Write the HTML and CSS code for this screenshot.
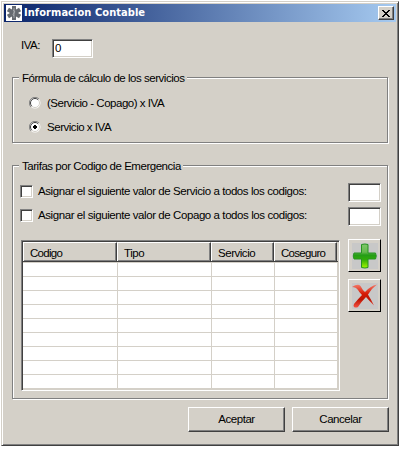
FILE: index.html
```
<!DOCTYPE html>
<html lang="es">
<head>
<meta charset="utf-8">
<title>Informacion Contable</title>
<link rel="stylesheet" href="styles.css">
</head>
<body>
<main class="window">
  <header class="titlebar">
    <svg class="app-icon" viewBox="0 0 16 16"><path fill="#fff" d="M0 0h16v16H0z"/><g fill="#656a70"><path d="M6 1h4v14H6z"/><path d="M6 1h4v14H6z" transform="rotate(60 8 8)"/><path d="M6 1h4v14H6z" transform="rotate(-60 8 8)"/></g><path d="M8 3v10M7 5q3 1 1 3t0 3" fill="none" stroke="#c4c7ca" stroke-width=".6"/></svg>
    <h1 class="title">Informacion Contable</h1>
    <button class="close" aria-label="Cerrar"><svg width="8" height="7" viewBox="0 0 8 7" shape-rendering="crispEdges"><path d="M0 0h2v1h1v1h2V1h1V0h2v1H7v1H6v1H5v1h1v1h1v1h1v1H6V6H5V5H3v1H2v1H0V6h1V5h1V4h1V3H2V2H1V1H0z"/></svg></button>
  </header>
  <section class="content">
    <label class="iva"><span class="iva-label">IVA:</span><input class="field iva-field" value="0"></label>
    <section class="group formula">
      <h2 class="legend legend-formula">Fórmula de cálculo de los servicios</h2>
      <label class="option"><svg class="radio" viewBox="0 0 12 12"><circle cx="6" cy="6" r="5.5" fill="#fff"/><path d="M2 10A5.500 5.500 0 0 1 10 2" fill="none" stroke="#808080"/><path d="M2.8 9.200A4.500 4.500 0 0 1 9.200 2.800" fill="none" stroke="#404040"/><path d="M2.800 9.200A4.500 4.500 0 0 0 9.200 2.800" fill="none" stroke="#d4d0c8"/></svg><span>(Servicio - Copago) x IVA</span></label>
      <label class="option"><svg class="radio" viewBox="0 0 12 12"><circle cx="6" cy="6" r="5.5" fill="#fff"/><path d="M2 10A5.500 5.500 0 0 1 10 2" fill="none" stroke="#808080"/><path d="M2.8 9.200A4.500 4.500 0 0 1 9.200 2.800" fill="none" stroke="#404040"/><path d="M2.800 9.200A4.500 4.500 0 0 0 9.200 2.800" fill="none" stroke="#d4d0c8"/><path d="M5 4h2v1h1v2H7v1H5V7H4V5h1z"/></svg><span>Servicio x IVA</span></label>
    </section>
    <section class="group rates">
      <h2 class="legend legend-rates">Tarifas por Codigo de Emergencia</h2>
      <div class="assign"><i class="check"></i><span class="assign-text">Asignar el siguiente valor de Servicio a todos los codigos:</span><input class="field small"></div>
      <div class="assign"><i class="check"></i><span class="assign-text">Asignar el siguiente valor de Copago a todos los codigos:</span><input class="field small"></div>
      <div class="list">
        <div class="table">
          <div class="row head"><span class="th th-tight">Codigo</span><span class="th">Tipo</span><span class="th">Servicio</span><span class="th th-tight">Coseguro</span></div>
          <div class="row"><i></i><i></i><i></i><i></i><i></i></div>
          <div class="row"><i></i><i></i><i></i><i></i><i></i></div>
          <div class="row"><i></i><i></i><i></i><i></i><i></i></div>
          <div class="row"><i></i><i></i><i></i><i></i><i></i></div>
          <div class="row"><i></i><i></i><i></i><i></i><i></i></div>
          <div class="row"><i></i><i></i><i></i><i></i><i></i></div>
          <div class="row"><i></i><i></i><i></i><i></i><i></i></div>
          <div class="row"><i></i><i></i><i></i><i></i><i></i></div>
          <div class="row"><i></i><i></i><i></i><i></i><i></i></div>
        </div>
        <div class="tools">
          <button class="tool" aria-label="Agregar"><svg width="26" height="26" viewBox="0 0 26 26"><defs><linearGradient id="green" x1="0" y1="0" x2="0" y2="1"><stop offset="0" stop-color="#80c86c"/><stop offset=".34" stop-color="#65b94d"/><stop offset=".46" stop-color="#249c17"/><stop offset=".65" stop-color="#31ac08"/><stop offset="1" stop-color="#a3f900"/></linearGradient></defs><path fill="#c8c8c8" d="M0 0h26v26H0z"/><path d="M9.500 1.500Q13 .5 16 1.500V10h7.500q1.500 3 0 6H16v8.500q-3 1-6.500 0V16H2q-1.500-3 0-6h7.500z" fill="url(#green)" stroke="#279222"/></svg></button>
          <button class="tool" aria-label="Eliminar"><svg width="26" height="26" viewBox="0 0 26 26"><defs><linearGradient id="red" x1="0" y1="0" x2="0" y2="1"><stop offset="0" stop-color="#f47b68"/><stop offset=".4" stop-color="#d61b06"/><stop offset=".65" stop-color="#bd1402"/><stop offset="1" stop-color="#f55242"/></linearGradient></defs><path fill="#c8c8c8" d="M0 0h26v26H0z"/><path fill="url(#red)" d="M0 4Q6 0 8.500 3q2 4 4.500 6 5-6 12-7.500Q20 5 16 11.500q3 5 6 11-5-5-8-8.500Q9 19 6 24q-2 1-4 0-1-1 0-3 4-5 8-9-3-3-4-5-2-3-6-3z"/></svg></button>
        </div>
      </div>
    </section>
    <footer class="actions"><button class="button">Aceptar</button><button class="button">Cancelar</button></footer>
  </section>
</main>
</body>
</html>
```
FILE: styles.css
```
* { box-sizing: border-box; }
body { margin: 0; background: #fff; color: #000; font: 11.5px/14px "Liberation Sans", Arial, sans-serif; letter-spacing: -.47px; white-space: nowrap; overflow: hidden; }
h1, h2 { margin: 0; font-size: inherit; font-weight: normal; }
button, input { font: inherit; color: inherit; letter-spacing: inherit; }
.window { width: 398px; height: 445px; margin: 1px; padding: 2px; background: #d4d0c8; border: 1px solid; border-color: #d4d0c8 #404040 #404040 #d4d0c8; box-shadow: inset 1px 1px #fff, inset -1px -1px #808080; }
.titlebar { height: 18px; display: flex; align-items: center; padding: 0 2px; background: linear-gradient(90deg, #0a246a, #a6caf0); }
.app-icon { width: 16px; height: 16px; }
.title { flex: 1; padding-left: 2px; color: #fff; font: bold 11px/16px "DejaVu Sans Condensed", "DejaVu Sans", sans-serif; letter-spacing: .06px; }
.close { width: 16px; height: 14px; padding: 0; display: flex; align-items: center; justify-content: center; background: #d4d0c8; border: 1px solid; border-color: #fff #404040 #404040 #fff; box-shadow: inset -1px -1px #808080; }
.content { padding: 17px 7px 0 8px; }
.iva { display: flex; height: 19px; padding-left: 9px; }
.iva-label { width: 31px; margin-top: -1px; }
.field { display: block; height: 19px; padding: 0 1px 1px 2px; border: 1px solid; border-color: #808080 #fff #fff #808080; border-radius: 0; background: #fff; box-shadow: inset 1px 1px #404040, inset -1px -1px #d4d0c8; outline: 0; }
.iva-field { width: 41px; }
.group { border: 1px solid #808080; box-shadow: 1px 1px #fff, inset 1px 1px #fff; width: 376px; }
.legend { height: 14px; margin: -7px 0 0 6px; padding-left: 3px; background: #d4d0c8; }
.legend-formula { width: 168px; }
.legend-rates { width: 164px; margin-bottom: 10px; }
.formula { height: 66px; margin-top: 19px; }
.option { display: flex; height: 24px; align-items: center; padding-left: 16px; }
.legend-formula + .option { margin-top: 6px; }
.radio { width: 12px; height: 12px; margin-right: 6px; }
.rates { height: 234px; margin-top: 22px; }
.assign { display: flex; height: 24px; padding-left: 7px; }
.check { width: 13px; height: 13px; margin: 2px 5px 0 0; background: #fff; border: 1px solid; border-color: #808080 #fff #fff #808080; box-shadow: inset 1px 1px #404040, inset -1px -1px #d4d0c8; }
.assign-text { width: 310px; padding-top: 1px; letter-spacing: -.42px; }
.small { width: 33px; }
.list { display: flex; gap: 8px; padding: 8px 0 0 8px; }
.table { width: 319px; height: 151px; margin-top: 1px; padding: 1px; border: 1px solid; border-color: #808080 #fff #fff #808080; box-shadow: inset 1px 1px #404040, inset -1px -1px #d4d0c8; }
.row { display: grid; grid-template-columns: 94px 94px 63px 63px 1px; height: 14px; border-top: 1px solid #d4d0c8; }
.row i { background: #fff; border-left: 1px solid #d4d0c8; }
.row i:first-child { border-left: 0; }
.head { height: 20px; border: 0; background: #d4d0c8; border-bottom: 1px solid #404040; }
.th { padding: 3px 0 0 6px; border-left: 1px solid #fff; border-top: 1px solid #fff; border-right: 1px solid #404040; box-shadow: inset -1px -1px #808080; }
.th-tight { letter-spacing: -.7px; }
.tools { display: flex; flex-direction: column; gap: 7px; }
.tool { width: 33px; height: 33px; padding: 2px; background: #d4d0c8; border: 1px solid; border-color: #fff #000 #000 #fff; }
.tool svg { display: block; margin-left: 1px; }
.actions { display: flex; justify-content: flex-end; gap: 7px; margin-top: 8px; }
.button { width: 97px; height: 25px; padding: 0 0 2px; background: #d4d0c8; border: 1px solid; border-color: #fff #404040 #404040 #fff; box-shadow: inset -1px -1px #808080; }
```
